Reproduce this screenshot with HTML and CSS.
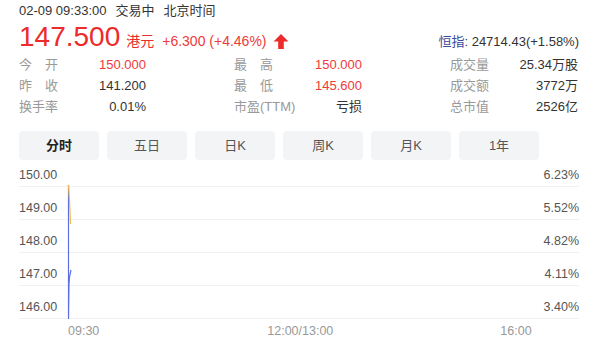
FILE: index.html
```html
<!DOCTYPE html>
<html lang="zh-CN">
<head>
<meta charset="utf-8">
<title>行情</title>
<link rel="stylesheet" href="styles.css">
</head>
<body>
<div class="page">
  <div class="topline">
    <span>02-09 09:33:00</span><span class="gap">交易中</span><span class="gap">北京时间</span>
  </div>
  <div class="priceline">
    <div class="price-left">
      <span class="price">147.500</span>
      <span class="unit">港元</span>
      <span class="change">+6.300 (+4.46%)</span>
      <svg class="arrow" width="16" height="15" viewBox="0 0 16 15"><path d="M8 0 L15.5 7.5 L10.8 7.5 L10.8 15 L5.2 15 L5.2 7.5 L0.5 7.5 Z" fill="#ee2b2b"/></svg>
    </div>
    <div class="index"><span class="index-name">恒指</span>: 24714.43(+1.58%)</div>
  </div>
  <div class="stats">
    <div class="cell"><span class="lbl just">今开</span><span class="val red">150.000</span></div>
    <div class="cell"><span class="lbl just">最高</span><span class="val red">150.000</span></div>
    <div class="cell"><span class="lbl">成交量</span><span class="val">25.34万股</span></div>
    <div class="cell"><span class="lbl just">昨收</span><span class="val">141.200</span></div>
    <div class="cell"><span class="lbl just">最低</span><span class="val red">145.600</span></div>
    <div class="cell"><span class="lbl">成交额</span><span class="val">3772万</span></div>
    <div class="cell"><span class="lbl">换手率</span><span class="val">0.01%</span></div>
    <div class="cell"><span class="lbl">市盈(TTM)</span><span class="val">亏损</span></div>
    <div class="cell"><span class="lbl">总市值</span><span class="val">2526亿</span></div>
  </div>
  <div class="tabs">
    <div class="tab active">分时</div>
    <div class="tab">五日</div>
    <div class="tab">日K</div>
    <div class="tab">周K</div>
    <div class="tab">月K</div>
    <div class="tab">1年</div>
  </div>
  <div class="chart">
    <div class="row first"><span>150.00</span><span>6.23%</span></div>
    <div class="row"><span>149.00</span><span>5.52%</span></div>
    <div class="row"><span>148.00</span><span>4.82%</span></div>
    <div class="row"><span>147.00</span><span>4.11%</span></div>
    <div class="row"><span>146.00</span><span>3.40%</span></div>
    <svg class="lines" width="560" height="160" viewBox="0 0 560 160">
      <path d="M49.5 25 L49.5 159 L50 124 L50.5 117 L52 110" fill="none" stroke="#5b6fe0" stroke-width="1.2"/>
      <path d="M49.5 25 L50.5 40 L51.5 64" fill="none" stroke="#f2b94c" stroke-width="1.2"/>
    </svg>
  </div>
  <div class="times">
    <span class="t1">09:30</span>
    <span class="t2">12:00/13:00</span>
    <span class="t3">16:00</span>
  </div>
</div>
</body>
</html>
```
FILE: styles.css
```css
html, body {
  margin: 0;
  padding: 0;
  background: #fff;
}
body {
  font-family: "Liberation Sans", "Noto Sans CJK SC", sans-serif;
  color: #333;
  font-size: 13px;
}
.page {
  width: 560px;
  padding: 3px 0 0 19px;
}
.topline {
  height: 16px;
  line-height: 16px;
  font-size: 13px;
  color: #333;
  display: flex;
}
.topline .gap {
  margin-left: 9px;
}
.priceline {
  margin-top: 3px;
  height: 30px;
  display: flex;
  align-items: baseline;
  justify-content: space-between;
}
.price-left {
  display: flex;
  align-items: baseline;
}
.price {
  font-size: 28px;
  line-height: 30px;
  color: #ee2b2b;
}
.unit {
  font-size: 14px;
  color: #ee2b2b;
  margin-left: 6px;
}
.change {
  font-size: 14px;
  color: #ee3a3a;
  margin-left: 8px;
}
.arrow {
  margin-left: 6px;
  align-self: center;
  position: relative;
  top: 4px;
}
.index {
  font-size: 13px;
  color: #333;
}
.index-name {
  color: #3a4a9c;
}
.stats {
  margin-top: 2px;
  display: grid;
  grid-template-columns: 127px 128px 128px;
  column-gap: 88px;
}
.cell {
  display: flex;
  justify-content: space-between;
  height: 21px;
  line-height: 21px;
}
.lbl {
  color: #999;
}
.lbl.just {
  width: 39px;
  text-align: justify;
  text-align-last: justify;
}
.val {
  color: #333;
}
.val.red {
  color: #ee3a3a;
}
.tabs {
  margin-top: 14px;
  display: flex;
  gap: 8px;
}
.tab {
  width: 80px;
  height: 29px;
  line-height: 29px;
  text-align: center;
  background: #f3f4f6;
  border-radius: 4px;
  color: #555;
  font-size: 13px;
}
.tab.active {
  color: #222;
  font-weight: bold;
}
.chart {
  position: relative;
  width: 560px;
}
.row {
  height: 32px;
  border-bottom: 1px solid #f1f1f1;
  display: flex;
  justify-content: space-between;
  align-items: flex-end;
  font-size: 12.5px;
  color: #555;
  line-height: 14px;
  padding-bottom: 4px;
  box-sizing: border-box;
  height: 33px;
}
.row.first {
  height: 27px;
}
.lines {
  position: absolute;
  left: 0;
  top: 0;
}
.times {
  margin-top: 5px;
  display: flex;
  font-size: 12.5px;
  line-height: 14px;
  color: #999;
}
.t1 {
  margin-left: 49px;
}
.t2 {
  margin-left: 168px;
}
.t3 {
  margin-left: 167px;
}
```
